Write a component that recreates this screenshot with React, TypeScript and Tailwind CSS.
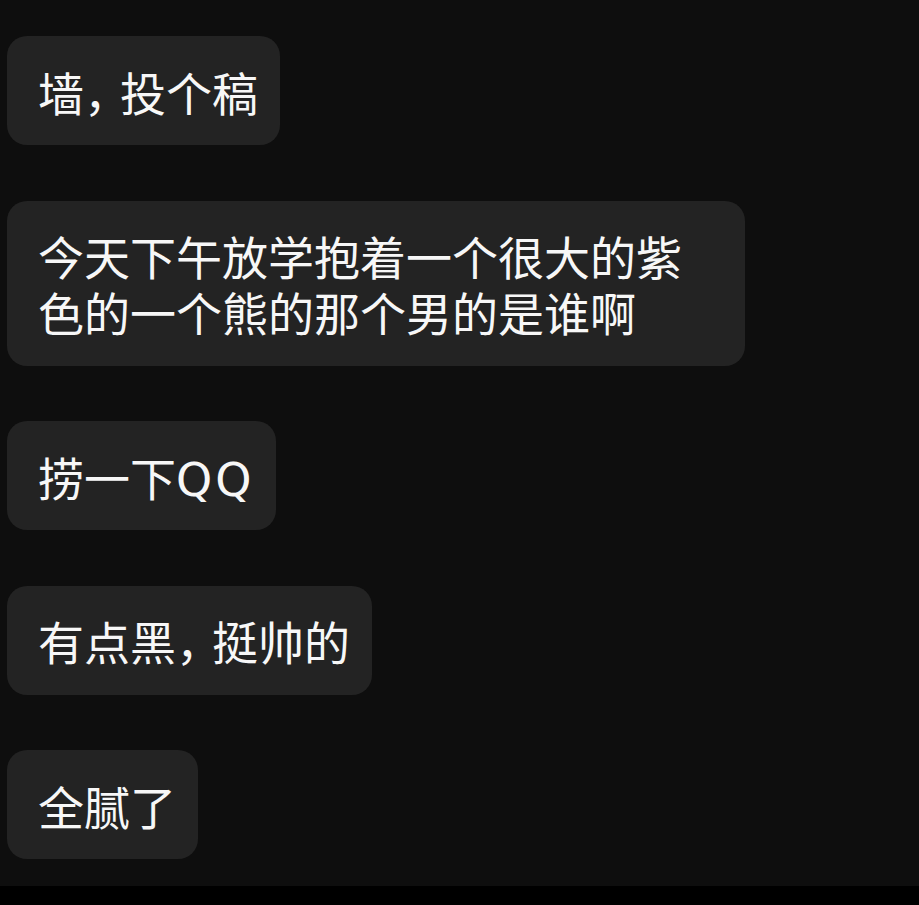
// Chat screenshot — plain stack of incoming message bubbles

import React from "react";

const messages: React.ReactNode[] = [
  <>
    墙<span className="tracking-[-10px]">，</span>投个稿
  </>,
  "今天下午放学抱着一个很大的紫色的一个熊的那个男的是谁啊",
  <>
    捞一下
    <span
      className="tracking-[3px] leading-[40px]"
      style={{ fontFamily: '"DejaVu Sans", sans-serif' }}
    >
      QQ
    </span>
  </>,
  <>
    有点黑<span className="tracking-[-10px]">，</span>挺帅的
  </>,
  "全腻了",
];

export default function App() {
  return (
    <div
      className="w-full h-[905px] bg-black"
      style={{ fontFamily: '"Noto Sans CJK SC", "Noto Sans", sans-serif' }}
    >
      <div className="h-[886px] bg-[#0e0e0e] flex flex-col items-start gap-[55.5px] pt-[36px] pl-[7px]">
        {messages.map((msg, i) => (
          <div
            key={i}
            className="max-w-[738px] bg-[#232323] rounded-[20px] pl-[31px] pr-[22px] py-[26.5px] text-[46px] leading-[56px] text-[#f7f7f7]"
          >
            {msg}
          </div>
        ))}
      </div>
    </div>
  );
}
